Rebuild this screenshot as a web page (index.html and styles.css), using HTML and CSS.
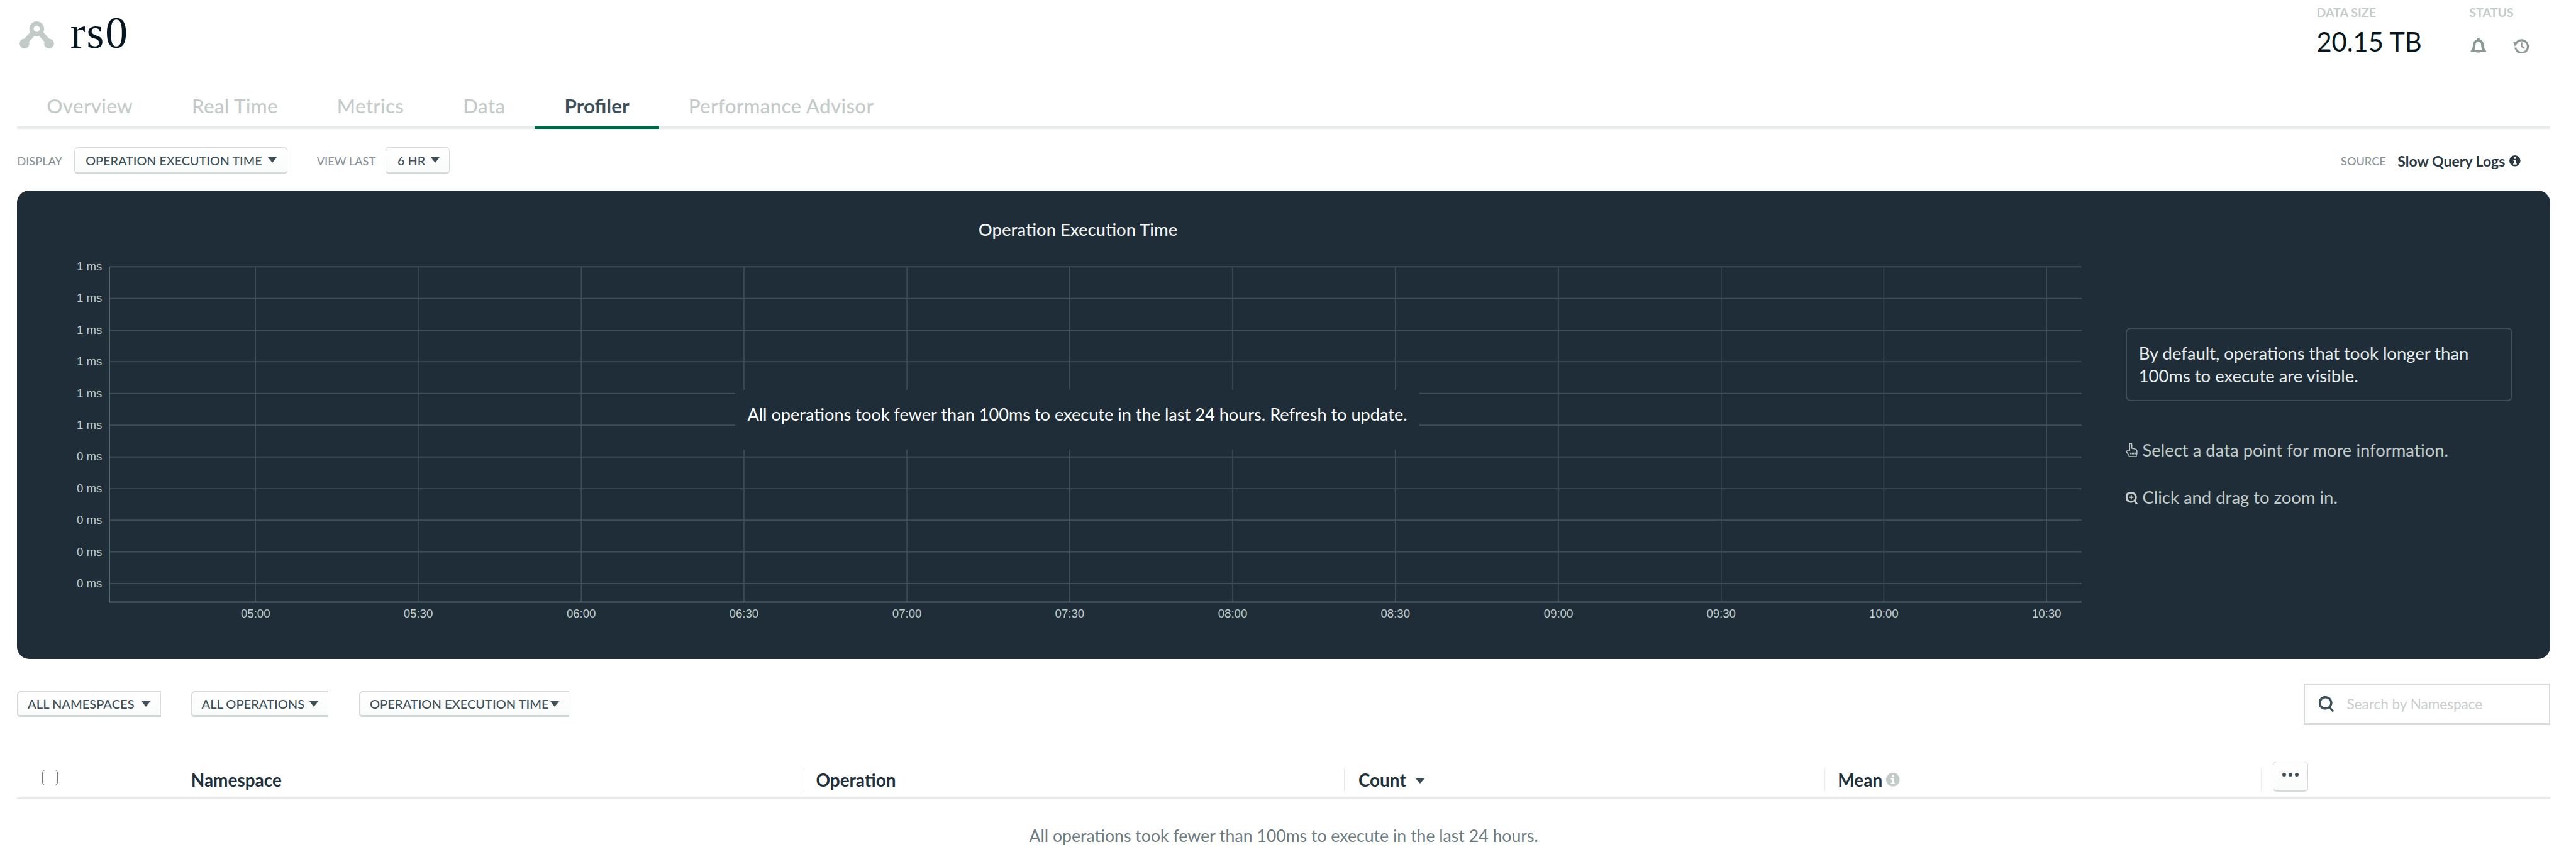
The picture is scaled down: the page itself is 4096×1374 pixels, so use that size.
FILE: index.html
```html
<!DOCTYPE html>
<html lang="en">
<head>
    <meta charset="UTF-8">
    <title>rs0 - Profiler</title>
    <link rel="stylesheet" href="styles.css">
</head>
<body>
    <header class="top">
        <div class="title">
            <svg class="rs-icon" viewBox="0 0 56 44"><path d="M28 12 L8 35 M28 12 L48 35" /><circle cx="28" cy="12" r="8.5" /><circle class="dot" cx="8" cy="36" r="8" /><circle class="dot" cx="48" cy="36" r="8" /></svg>
            <h1>rs0</h1>
        </div>
        <div class="stats">
            <div class="stat stat-size">
                <span class="stat-label">DATA SIZE</span>
                <span class="stat-value">20.15 TB</span>
            </div>
            <div class="stat stat-status">
                <span class="stat-label">STATUS</span>
                <span class="stat-icons">
                    <svg class="status-icon" viewBox="0 0 26 26"><path fill-rule="evenodd" d="M13 0a2.4 2.4 0 0 1 2.3 3C20 4.2 22 8 22 13c0 4 1.6 6 3.6 8.6V23H.4v-1.4C2.4 19 4 17 4 13c0-5 2-8.8 6.7-10A2.4 2.4 0 0 1 13 0zM13 6.500c-3.500 0-4.700 3-4.700 6.500 0 3-.7 5.300-1.800 7.300h13c-1.100-2-1.800-4.300-1.800-7.300 0-3.500-1.200-6.500-4.700-6.500zM9.500 24h7a3.500 3.500 0 0 1-7 0z" /></svg>
                    <svg class="status-icon" viewBox="0 0 28 26"><path d="M5.500 8.500A11 11 0 1 1 4 16" class="ring" /><path d="M0 6l8.500 1.500L3 14z" /><path d="M15 7v7l5 3.500" class="ring thin" /></svg>
                </span>
            </div>
        </div>
    </header>

    <nav class="tabs">
        <a class="tab">Overview</a>
        <a class="tab">Real Time</a>
        <a class="tab">Metrics</a>
        <a class="tab">Data</a>
        <a class="tab active">Profiler</a>
        <a class="tab">Performance Advisor</a>
    </nav>

    <div class="controls">
        <span class="ctl-label label-display">DISPLAY</span>
        <button class="dropdown dd-display">OPERATION EXECUTION TIME<span class="caret"></span></button>
        <span class="ctl-label label-view">VIEW LAST</span>
        <button class="dropdown dd-range">6 HR<span class="caret"></span></button>
        <div class="source">
            <span class="ctl-label">SOURCE</span>
            <strong>Slow Query Logs</strong>
            <svg class="info-dark" viewBox="0 0 18 18"><circle cx="9" cy="9" r="9" /><rect class="cut" x="7.600" y="2.800" width="3" height="3" rx="1" /><path class="cut" d="M6.500 7.200h4.200v6h1.200v1.800H6.300v-1.800h1.300V9H6.500z" /></svg>
        </div>
    </div>

    <section class="panel">
        <div class="chart">
            <h2 class="chart-title">Operation Execution Time</h2>
            <svg class="plot" width="3350" height="700" viewBox="28 350 3350 700">
                <g class="grid-h">
                    <line x1="178" x2="3378" y1="433" y2="433" />
                    <line x1="178" x2="3378" y1="484.500" y2="484.500" />
                    <line x1="178" x2="3378" y1="536" y2="536" />
                    <line x1="178" x2="3378" y1="587" y2="587" />
                    <line x1="178" x2="3378" y1="638.500" y2="638.500" />
                    <line x1="178" x2="3378" y1="690" y2="690" />
                    <line x1="178" x2="3378" y1="741.500" y2="741.500" />
                    <line x1="178" x2="3378" y1="793" y2="793" />
                    <line x1="178" x2="3378" y1="844" y2="844" />
                    <line x1="178" x2="3378" y1="895.500" y2="895.500" />
                    <line x1="178" x2="3378" y1="947" y2="947" />
                </g>
                <g class="grid-v">
                    <line x1="415" x2="415" y1="433" y2="977" />
                    <line x1="679" x2="679" y1="433" y2="977" />
                    <line x1="943.500" x2="943.500" y1="433" y2="977" />
                    <line x1="1207.500" x2="1207.500" y1="433" y2="977" />
                    <line x1="1472" x2="1472" y1="433" y2="977" />
                    <line x1="1736" x2="1736" y1="433" y2="977" />
                    <line x1="2000.500" x2="2000.500" y1="433" y2="977" />
                    <line x1="2264.500" x2="2264.500" y1="433" y2="977" />
                    <line x1="2529" x2="2529" y1="433" y2="977" />
                    <line x1="2793" x2="2793" y1="433" y2="977" />
                    <line x1="3057" x2="3057" y1="433" y2="977" />
                    <line x1="3321" x2="3321" y1="433" y2="977" />
                </g>
                <g class="axis">
                    <line x1="178" x2="178" y1="433" y2="977" />
                    <line x1="178" x2="3378" y1="977" y2="977" />
                </g>
                <g class="y-labels">
                    <text x="166" y="439">1 ms</text>
                    <text x="166" y="490">1 ms</text>
                    <text x="166" y="542">1 ms</text>
                    <text x="166" y="593">1 ms</text>
                    <text x="166" y="645">1 ms</text>
                    <text x="166" y="696">1 ms</text>
                    <text x="166" y="747">0 ms</text>
                    <text x="166" y="799">0 ms</text>
                    <text x="166" y="850">0 ms</text>
                    <text x="166" y="902">0 ms</text>
                    <text x="166" y="953">0 ms</text>
                </g>
                <g class="x-labels">
                    <text x="415" y="1002">05:00</text>
                    <text x="679" y="1002">05:30</text>
                    <text x="943.500" y="1002">06:00</text>
                    <text x="1207.500" y="1002">06:30</text>
                    <text x="1472" y="1002">07:00</text>
                    <text x="1736" y="1002">07:30</text>
                    <text x="2000.500" y="1002">08:00</text>
                    <text x="2264.500" y="1002">08:30</text>
                    <text x="2529" y="1002">09:00</text>
                    <text x="2793" y="1002">09:30</text>
                    <text x="3057" y="1002">10:00</text>
                    <text x="3321" y="1002">10:30</text>
                </g>
            </svg>
            <div class="no-data">All operations took fewer than 100ms to execute in the last 24 hours. Refresh to update.</div>
        </div>
        <aside class="side">
            <p class="side-box">By default, operations that took longer than 100ms to execute are visible.</p>
            <p class="side-hint hint-hand">
                <svg class="hint-icon" viewBox="0 0 20 24"><path d="M6.500 13V2.700a1.700 1.700 0 0 1 3.400 0V9l5.600 1.300c1.700.4 2.700 1.400 2.700 3V18l-1 3v1.500H5.500V21L1.700 15.500c-1.200-1.800 1-3.400 2.400-2zM8 16v3M10.500 16v3M13 16v3M15.500 16v3" /></svg>
                Select a data point for more information.
            </p>
            <p class="side-hint hint-zoom">
                <svg class="hint-icon zoom-icon" viewBox="0 0 20 24"><path fill-rule="evenodd" d="M9 3a9 9 0 0 1 7.200 14.400l3.300 5-2.800 1.600-3.100-5A9 9 0 1 1 9 3zm0 3a6 6 0 1 0 0 12A6 6 0 0 0 9 6zM8 8.500h2V11h2.500v2H10v2.500H8V13H5.500v-2H8z" /></svg>
                Click and drag to zoom in.
            </p>
        </aside>
    </section>

    <div class="filters">
        <button class="dropdown filter f-ns">ALL NAMESPACES<span class="caret"></span></button>
        <button class="dropdown filter f-op">ALL OPERATIONS<span class="caret"></span></button>
        <button class="dropdown filter f-time">OPERATION EXECUTION TIME<span class="caret"></span></button>
        <label class="search">
            <svg class="search-icon" viewBox="0 0 26 26"><path fill-rule="evenodd" d="M11 0a11 11 0 0 1 8.300 18.200L25 24l-2.500 2-5.900-6A11 11 0 1 1 11 0zm0 3.500a7.500 7.500 0 1 0 0 15 7.500 7.500 0 0 0 0-15z" /></svg>
            <span>Search by Namespace</span>
        </label>
    </div>

    <div class="thead">
        <div class="th th-check"><span class="checkbox"></span></div>
        <div class="th th-ns">Namespace</div>
        <div class="th th-op">Operation</div>
        <div class="th th-count">Count<span class="sort-caret"></span></div>
        <div class="th th-mean">Mean
            <svg class="info-light" viewBox="0 0 22 22"><circle cx="11" cy="11" r="11" /><rect class="cut" x="9.200" y="3.500" width="3.600" height="3.400" rx="1.200" /><path class="cut" d="M7.800 8.500h5v7.500h1.400v2.200H7.800V16h1.400v-5.300H7.800z" /></svg>
        </div>
        <div class="th th-more"><button class="more-btn"><i></i><i></i><i></i></button></div>
    </div>

    <p class="empty">All operations took fewer than 100ms to execute in the last 24 hours.</p>
</body>
</html>
```
FILE: styles.css
```css
* {
    margin: 0;
    padding: 0;
    box-sizing: border-box;
}

html {
    overflow: hidden;
}

body {
    zoom: 0.98;
    font-family: Lato, "Open Sans", sans-serif;
    background: #fff;
    color: #21313c;
    padding: 0 42px 0 28px;
}

/* header */
.top {
    display: flex;
    justify-content: space-between;
    height: 140px;
}

.title {
    display: flex;
    align-items: flex-start;
    padding-top: 13px;
}

.rs-icon {
    width: 56px;
    height: 44px;
    margin: 22px 0 0 4px;
}

.rs-icon path {
    fill: none;
    stroke: #c3cbc9;
    stroke-width: 9;
    stroke-linecap: round;
}

.rs-icon circle {
    fill: #fff;
    stroke: #c3cbc9;
    stroke-width: 7;
}

.rs-icon .dot {
    fill: #c3cbc9;
    stroke: none;
}

.title h1 {
    font-family: "Liberation Serif", serif;
    font-weight: 400;
    font-size: 73px;
    line-height: 80px;
    letter-spacing: 2px;
    color: #061621;
    margin-left: 26px;
}

.stats {
    display: flex;
    width: 379px;
}

.stat {
    display: flex;
    flex-direction: column;
    padding-top: 10px;
}

.stat-size {
    width: 248px;
}

.stat-label {
    font-size: 20px;
    line-height: 20px;
    font-weight: 700;
    color: #c3cbc9;
}

.stat-value {
    font-size: 42.500px;
    line-height: 54px;
    margin-top: 11px;
    color: #061621;
}

.stat-icons {
    display: flex;
    gap: 43px;
    margin-top: 31px;
    padding-left: 2px;
}

.status-icon {
    width: 26px;
    height: 26px;
    fill: #8a9896;
}

.status-icon .ring {
    fill: none;
    stroke: #8a9896;
    stroke-width: 3.500;
}

.status-icon .thin {
    stroke-width: 2.500;
}

/* tabs */
.tabs {
    display: flex;
    height: 69px;
    border-bottom: 6px solid #e7eceb;
}

.tab {
    height: 69px;
    line-height: 64px;
    padding: 0 48px;
    font-size: 32px;
    font-weight: 500;
    letter-spacing: 0.3px;
    color: #c3cbc9;
}

.tab.active {
    color: #3d4f58;
    font-weight: 700;
    letter-spacing: 0;
    border-bottom: 6px solid #00684a;
}

/* dropdown rows */
.controls {
    display: flex;
    align-items: center;
    height: 44px;
    margin-top: 30px;
}

.ctl-label {
    font-size: 18.500px;
    font-weight: 500;
    color: #889397;
}

.label-display {
    width: 92px;
}

.label-view {
    width: 112px;
    margin-left: 48px;
}

.dropdown {
    display: flex;
    align-items: center;
    justify-content: space-between;
    height: 44px;
    padding: 0 16px 0 18px;
    font-family: inherit;
    font-size: 20.200px;
    font-weight: 500;
    white-space: nowrap;
    color: #3d4f58;
    background: linear-gradient(#fff, #f9fbfa);
    border: 2px solid #d5dbd9;
    border-bottom-width: 4px;
    border-radius: 6px;
}

.caret {
    width: 0;
    height: 0;
    border-left: 8px solid transparent;
    border-right: 8px solid transparent;
    border-top: 10px solid #3d4f58;
}

.dd-display {
    width: 346px;
}

.dd-range {
    width: 104px;
}

.source {
    display: flex;
    align-items: center;
    margin-left: auto;
    margin-right: 48px;
}

.source strong {
    font-size: 23.500px;
    font-weight: 700;
    color: #2b3a42;
    margin-left: 19px;
}

.info-dark {
    width: 18px;
    height: 18px;
    margin-left: 7px;
    fill: #2b3a42;
}

.info-dark .cut {
    fill: #fff;
}

/* chart panel */
.panel {
    display: flex;
    height: 760px;
    margin-top: 26px;
    background: #1e2d38;
    border-radius: 20px;
}

.chart {
    position: relative;
    width: 3350px;
}

.chart-title {
    height: 41px;
    padding-top: 43px;
    text-align: center;
    font-size: 28px;
    line-height: 40px;
    font-weight: 500;
    color: #f2f5f4;
    width: 3442px;
}

.plot {
    display: block;
    margin-top: 0;
    position: absolute;
    left: 0;
    top: 41px;
}

.grid-h line {
    stroke: #3f4e58;
    stroke-width: 2;
}

.grid-v line {
    stroke: #43515b;
    stroke-width: 1.500;
}

.axis line {
    stroke: #5a6a73;
    stroke-width: 2;
}

.plot text {
    font-family: "Liberation Sans", Arial, sans-serif;
    font-size: 19px;
    fill: #c3cdcb;
}

.y-labels text {
    text-anchor: end;
}

.x-labels text {
    text-anchor: middle;
}

.no-data {
    position: absolute;
    left: 1165px;
    top: 324px;
    width: 1110px;
    height: 97px;
    line-height: 80px;
    text-align: center;
    font-size: 27.700px;
    color: #fff;
    background: #1e2d38;
}

.side {
    padding: 223px 0 0 71px;
}

.side-box {
    width: 628px;
    height: 119px;
    padding: 21px 19px 0;
    border: 3px solid #3d4f58;
    border-radius: 8px;
    font-size: 28px;
    line-height: 37px;
    color: #e8edeb;
}

.side-hint {
    display: flex;
    align-items: center;
    gap: 7px;
    font-size: 28px;
    line-height: 40px;
    color: #c3cbc9;
}

.hint-hand {
    margin-top: 59px;
}

.hint-zoom {
    margin-top: 37px;
}

.hint-icon {
    width: 20px;
    height: 24px;
    fill: none;
    stroke: #c3cbc9;
    stroke-width: 1.500;
}

.zoom-icon {
    fill: #c3cbc9;
    stroke: none;
}

/* filters */
.filters {
    display: flex;
    align-items: center;
    height: 68px;
    margin-top: 40px;
}

.filter {
    height: 42px;
    padding: 0 16px;
    border-radius: 6px 0 0 6px;
    border-top-width: 3px;
    border-bottom-width: 5px;
    font-size: 20.500px;
}

.f-ns {
    width: 233px;
}

.f-op {
    width: 223px;
    margin-left: 49px;
}

.f-time {
    width: 341px;
    margin-left: 50px;
}

.search {
    display: flex;
    align-items: center;
    width: 400px;
    height: 68px;
    margin-left: auto;
    padding-left: 23px;
    border: 3px solid #d5dbd9;
    border-bottom-width: 4px;
    font-size: 23px;
    color: #c8cecd;
}

.search-icon {
    width: 26px;
    height: 26px;
    margin-right: 19px;
    fill: #3d4f58;
}

/* table head */
.thead {
    display: flex;
    align-items: flex-end;
    height: 120px;
    padding-bottom: 9px;
    border-bottom: 4px solid #e7eceb;
}

.th {
    display: flex;
    align-items: center;
    height: 39px;
    font-size: 28.500px;
    font-weight: 700;
    color: #21313c;
}

.th-check {
    width: 282px;
    padding-left: 40px;
    align-items: flex-start;
    padding-top: 3px;
}

.checkbox {
    display: block;
    width: 26px;
    height: 26px;
    border: 2px solid #767676;
    border-radius: 5px;
}

.th-ns {
    width: 994px;
}

.th-op,
.th-count,
.th-mean,
.th-more {
    border-left: 2px solid #e7eceb;
}

.th-op {
    width: 877px;
    padding-left: 19px;
}

.th-count {
    width: 779px;
    padding-left: 22px;
}

.sort-caret {
    width: 0;
    height: 0;
    margin: 4px 0 0 16px;
    border-left: 8px solid transparent;
    border-right: 8px solid transparent;
    border-top: 9px solid #3d4f58;
}

.th-mean {
    width: 708px;
    padding-left: 21px;
}

.info-light {
    width: 22px;
    height: 22px;
    margin-left: 6px;
    fill: #c3cbc9;
}

.info-light .cut {
    fill: #fff;
}

.th-more {
    align-items: flex-end;
    padding-left: 19px;
}

.more-btn {
    display: flex;
    align-items: center;
    justify-content: center;
    gap: 4px;
    width: 57px;
    height: 49px;
    padding-bottom: 5px;
    background: linear-gradient(#fff, #f9fbfa);
    border: 2px solid #d5dbd9;
    border-bottom-width: 4px;
    border-radius: 6px;
}

.more-btn i {
    width: 6px;
    height: 6px;
    border-radius: 50%;
    background: #3d4f58;
}

.empty {
    padding-top: 40px;
    text-align: center;
    font-size: 27.200px;
    line-height: 40px;
    color: #6b7b7f;
}
```
